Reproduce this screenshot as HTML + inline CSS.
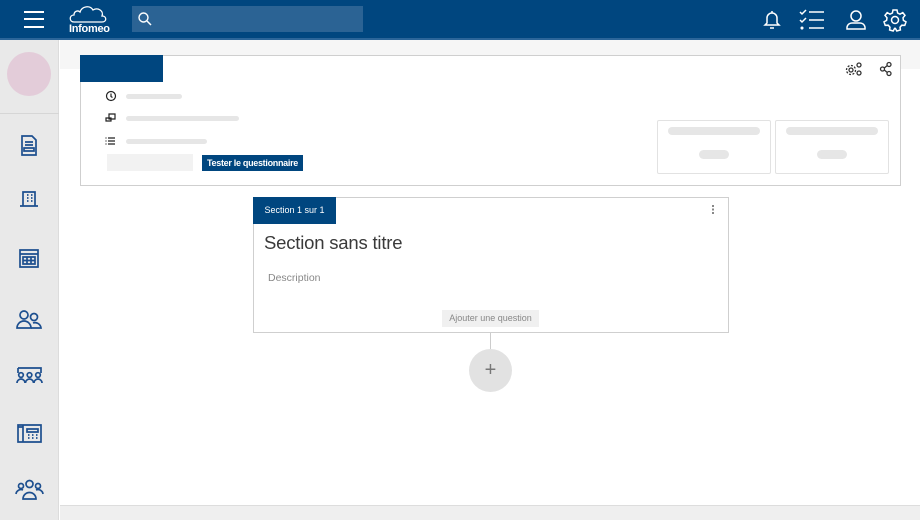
<!DOCTYPE html>
<html><head><style>
*{margin:0;padding:0;box-sizing:border-box}
body{width:920px;height:520px;position:relative;overflow:hidden;background:#fff;font-family:"Liberation Sans",sans-serif}
.a{position:absolute}
.bar{background:#e6e6e6;border-radius:3px;height:5px}
</style></head><body>
<div class="a" style="left:0;top:0;width:920px;height:39px;background:#00467f"></div>
<div class="a" style="left:0;top:38px;width:920px;height:2px;background:#2b6599"></div>
<div class="a" style="left:24px;top:11px;width:20px;height:2px;background:#fff"></div>
<div class="a" style="left:24px;top:18px;width:20px;height:2px;background:#fff"></div>
<div class="a" style="left:24px;top:26px;width:20px;height:2px;background:#fff"></div>
<svg class="a" style="left:68px;top:3px" width="42" height="22" viewBox="0 0 42 22"><path d="M6 19 C1 19 1 12 6 12 C6 8 10 7 12 9 C14 3 22 2 25 7 C30 4 36 8 34 13 C39 13 39 19 34 19 Z" fill="none" stroke="#fff" stroke-width="1.3"/></svg>
<div class="a" style="left:69px;top:23px;color:#fff;font-size:11px;font-weight:bold;letter-spacing:-0.3px">Infomeo</div>
<div class="a" style="left:132px;top:6px;width:231px;height:26px;background:#2b6394"></div>
<svg class="a" style="left:137px;top:11px" width="16" height="16" viewBox="0 0 16 16"><circle cx="6.5" cy="6.5" r="4.5" fill="none" stroke="#fff" stroke-width="1.4"/><path d="M10 10 L14 14" stroke="#fff" stroke-width="1.5"/></svg>
<svg class="a" style="left:760px;top:8px" width="24" height="24" viewBox="0 0 24 24" fill="none" stroke="#fff" stroke-width="1.5"><path d="M5 17 L7 15 V10 A5 5 0 0 1 17 10 V15 L19 17 Z"/><path d="M10 20 H14"/><path d="M12 3V5"/></svg>
<svg class="a" style="left:798px;top:8px" width="28" height="24" viewBox="0 0 28 24" fill="none" stroke="#fff" stroke-width="1.5"><path d="M2 4 L4 6 L8 2"/><path d="M2 12 L4 14 L8 10"/><circle cx="4" cy="20" r="0.8" fill="#fff"/><path d="M11 4H26M11 12H26M11 20H26"/></svg>
<svg class="a" style="left:844px;top:8px" width="24" height="24" viewBox="0 0 24 24" fill="none" stroke="#fff" stroke-width="1.5"><circle cx="12" cy="8" r="5"/><path d="M3 21 V19 A5 5 0 0 1 8 15 H16 A5 5 0 0 1 21 19 V21 Z"/></svg>
<svg class="a" style="left:883px;top:8px" width="24" height="24" viewBox="0 0 24 24" fill="none" stroke="#fff" stroke-width="1.5"><circle cx="12" cy="12" r="3.5"/><path d="M10 2H14L14.6 5 L17 6.2 L19.8 4.6 L22 7.4 L20 9.8 L20.4 12.4 L23 13.8 L21.8 17.4 L18.8 17.2 L17 19.2 L17.4 22 L13.8 23 L12.4 20.4 H11.6 L10.2 23 L6.6 22 L7 19.2 L5.2 17.2 L2.2 17.4 L1 13.8 L3.6 12.4 L4 9.8 L2 7.4 L4.2 4.6 L7 6.2 L9.4 5 Z"/></svg>
<div class="a" style="left:0;top:40px;width:59px;height:480px;background:#e9e9e9;border-right:1px solid #dcdcdc"></div>
<div class="a" style="left:7px;top:52px;width:44px;height:44px;border-radius:50%;background:#e3ccd9"></div>
<div class="a" style="left:0;top:113px;width:59px;height:1px;background:#d6d6d6"></div>
<svg class="a" style="left:0;top:130px" width="59" height="380" viewBox="0 0 59 380" fill="none" stroke="#1d4f8f" stroke-width="1.7">
<path d="M22 6 H32 L36 10 V25 H22 Z"/><path d="M25 12H33M25 15H33M24 18H34V21H24Z"/>
<path d="M23 62 H35 V76 H23 Z M20 76 H38"/><path d="M27 65h1.5M31 65h1.5M27 68h1.5M31 68h1.5M27 71h1.5M31 71h1.5"/>
<path d="M20 120 H38 V137 H20 Z M20 124 H38 M23 127 H35 V134 H23 Z M27 127V134 M31 127V134 M23 130.5H35"/>
<circle cx="24" cy="185" r="4"/><path d="M17 198 A7 7 0 0 1 31 198 Z"/><circle cx="34" cy="187" r="3.5"/><path d="M31 198 H41 A6 6 0 0 0 33 193"/>
<path d="M18 238 V243 M18 238 H41 V243"/><circle cx="21" cy="245" r="2.3"/><circle cx="29.5" cy="245" r="2.3"/><circle cx="38" cy="245" r="2.3"/><path d="M17 253 A4 4 0 0 1 25 253 M25.5 253 A4 4 0 0 1 33.5 253 M34 253 A4 4 0 0 1 42 253"/>
<path d="M18 295 H41 V312 H18 Z M23 295 V312 M18 297 H23"/><path d="M27 299H38V302H27Z"/><path d="M28 305h1.5M32 305h1.5M36 305h1.5M28 308h1.5M32 308h1.5M36 308h1.5"/>
<circle cx="29.5" cy="354" r="3.5"/><circle cx="21" cy="356" r="2.5"/><circle cx="38" cy="356" r="2.5"/><path d="M23 369 A6.5 6.5 0 0 1 36 369 Z M16 364 A5 5 0 0 1 23 360 M43 364 A5 5 0 0 0 36 360"/>
</svg>
<div class="a" style="left:60px;top:40px;width:860px;height:29px;background:#f6f6f6"></div>
<div class="a" style="left:60px;top:505px;width:860px;height:15px;background:#efefef;border-top:1px solid #ddd"></div>
<div class="a" style="left:80px;top:55px;width:821px;height:131px;background:#fff;border:1px solid #cfcfcf"></div>
<div class="a" style="left:80px;top:55px;width:83px;height:27px;background:#00467f"></div>
<svg class="a" style="left:104px;top:89px" width="14" height="60" viewBox="0 0 14 60" fill="none" stroke="#222" stroke-width="1.2"><circle cx="7" cy="7" r="4.5"/><path d="M7 4.5V7.5L8.5 8.5"/><path d="M5 25H11V30H5Z M2 29H7V32H2Z"/><path d="M4 49H11M4 52H11M4 55H11M1.5 49h1M1.5 52h1M1.5 55h1"/></svg>
<div class="a bar" style="left:126px;top:94px;width:56px"></div>
<div class="a bar" style="left:126px;top:116px;width:113px"></div>
<div class="a bar" style="left:126px;top:139px;width:81px"></div>
<div class="a" style="left:107px;top:154px;width:86px;height:17px;background:#f2f2f2"></div>
<div class="a" style="left:202px;top:155px;width:101px;height:16px;background:#00467f;color:#fff;font-size:9px;line-height:16px;text-align:center;font-weight:bold;letter-spacing:-0.3px">Tester le questionnaire</div>
<svg class="a" style="left:845px;top:61px" width="18" height="16" viewBox="0 0 18 16" fill="none" stroke="#333" stroke-width="1.3"><circle cx="6" cy="9" r="2"/><circle cx="6" cy="9" r="4.5" stroke-dasharray="2 1.5"/><circle cx="14" cy="4" r="2"/><circle cx="14" cy="12" r="2"/></svg>
<svg class="a" style="left:879px;top:61px" width="14" height="16" viewBox="0 0 14 16" fill="none" stroke="#333" stroke-width="1.3"><circle cx="10" cy="3.5" r="2"/><circle cx="3.5" cy="8" r="2"/><circle cx="10" cy="12.5" r="2"/><path d="M5.3 7L8.3 4.5M5.3 9L8.3 11.5"/></svg>
<div class="a" style="left:657px;top:120px;width:114px;height:54px;border:1px solid #e2e2e2;border-radius:2px"></div>
<div class="a" style="left:775px;top:120px;width:114px;height:54px;border:1px solid #e2e2e2;border-radius:2px"></div>
<div class="a bar" style="left:668px;top:127px;width:92px;height:8px;border-radius:4px"></div>
<div class="a bar" style="left:699px;top:150px;width:30px;height:9px;border-radius:5px"></div>
<div class="a bar" style="left:786px;top:127px;width:92px;height:8px;border-radius:4px"></div>
<div class="a bar" style="left:817px;top:150px;width:30px;height:9px;border-radius:5px"></div>
<div class="a" style="left:253px;top:197px;width:476px;height:136px;border:1px solid #cfcfcf;background:#fff"></div>
<div class="a" style="left:253px;top:197px;width:83px;height:27px;background:#00467f;color:#fff;font-size:9px;line-height:27px;text-align:center">Section 1 sur 1</div>
<div class="a" style="left:712px;top:205px;width:2px;height:9px;background:repeating-linear-gradient(#888 0 2px,transparent 2px 3.5px)"></div>
<div class="a" style="left:264px;top:232px;font-size:18.5px;color:#3a3a3a;letter-spacing:-0.2px">Section sans titre</div>
<div class="a" style="left:268px;top:272px;font-size:10.5px;color:#888">Description</div>
<div class="a" style="left:442px;top:310px;width:97px;height:17px;background:#f0f0f0;color:#888;font-size:9px;line-height:17px;text-align:center">Ajouter une question</div>
<div class="a" style="left:490px;top:333px;width:1px;height:16px;background:#ccc"></div>
<div class="a" style="left:469px;top:349px;width:43px;height:43px;border-radius:50%;background:#e2e2e2;color:#777;font-size:20px;line-height:42px;text-align:center">+</div>
</body></html>
